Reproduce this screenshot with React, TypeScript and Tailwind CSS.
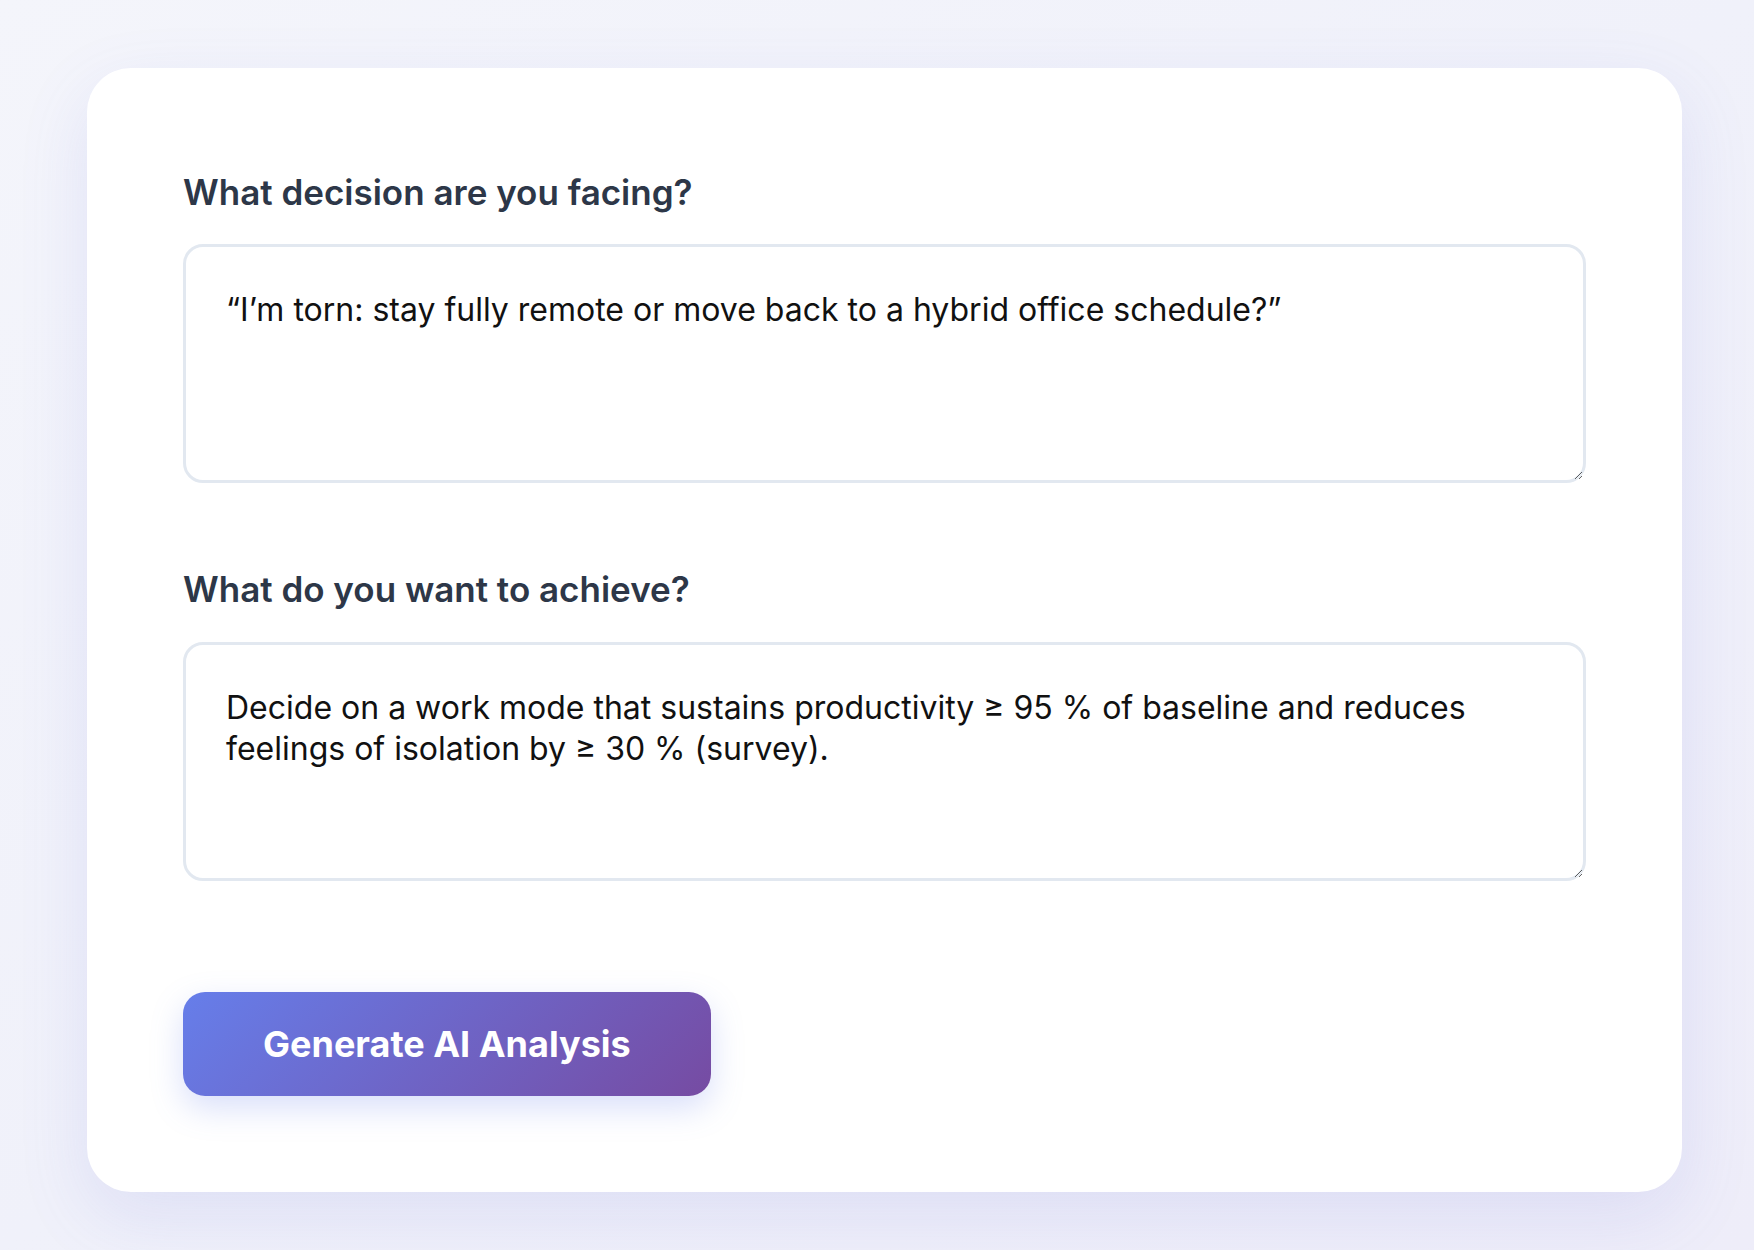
import { useState } from "react";

export default function App() {
  const [decision, setDecision] = useState(
    "\u201CI\u2019m torn: stay fully remote or move back to a hybrid office schedule?\u201D"
  );
  const [goal, setGoal] = useState(
    "Decide on a work mode that sustains productivity \u2265 95 % of baseline and reduces feelings of isolation by \u2265 30 % (survey)."
  );

  return (
    <div className="min-h-screen w-full bg-gradient-to-br from-[#f4f5fb] via-[#f0f1fa] to-[#eeedf9] pt-[68px] pb-[57px] font-['Inter',sans-serif]">
      <div className="ml-[87px] w-[1595px] rounded-[44px] bg-white px-24 pt-[99px] pb-24 shadow-[0_24px_70px_rgba(102,110,220,0.13)]">
        {/* Decision */}
        <div>
          <label className="block text-[35px] font-semibold leading-[51px] text-[#2d3748]">
            What decision are you facing?
          </label>
          <textarea
            value={decision}
            onChange={(e) => setDecision(e.target.value)}
            className="mt-[26px] block h-[239px] w-full resize-y rounded-[20px] border-[3px] border-[#e2e8f0] bg-white px-[40px] pt-[42px] pb-[30px] text-[32px] leading-[41px] text-[#111111] outline-none"
          />
        </div>

        {/* Goal */}
        <div className="mt-[81px]">
          <label className="block text-[35px] font-semibold leading-[51px] text-[#2d3748]">
            What do you want to achieve?
          </label>
          <textarea
            value={goal}
            onChange={(e) => setGoal(e.target.value)}
            className="mt-[27px] block h-[239px] w-full resize-y rounded-[20px] border-[3px] border-[#e2e8f0] bg-white px-[40px] pt-[42px] pb-[30px] text-[32px] leading-[41px] text-[#111111] outline-none"
          />
        </div>

        <button
          type="button"
          className="mt-[111px] flex h-[104px] items-center justify-center rounded-[22px] bg-[linear-gradient(135deg,#667eea_0%,#764ba2_100%)] px-[80px] text-[36px] font-bold text-white shadow-[0_12px_32px_rgba(102,126,234,0.25)]"
        >
          Generate AI Analysis
        </button>
      </div>
    </div>
  );
}
